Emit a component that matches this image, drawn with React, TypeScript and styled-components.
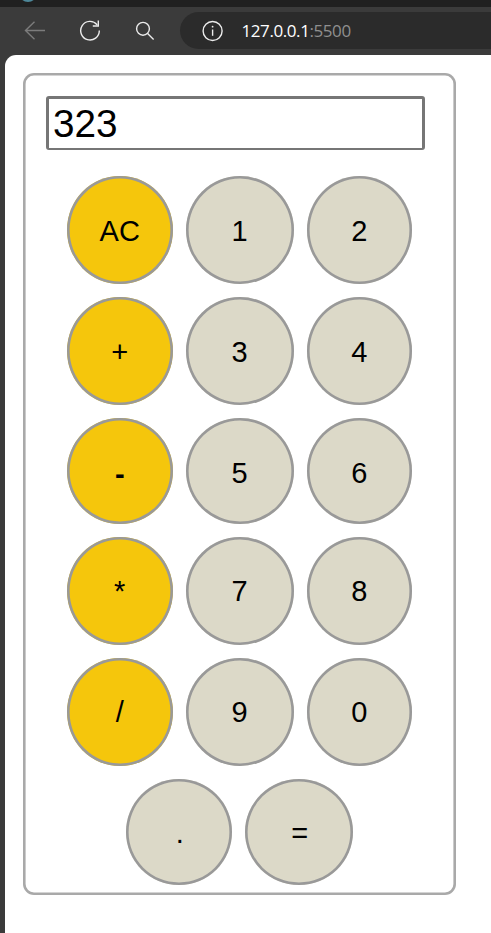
import React, { useState } from "react";
import styled, { createGlobalStyle } from "styled-components";

const GlobalStyle = createGlobalStyle`
  * { box-sizing: border-box; }
  html, body { margin: 0; padding: 0; background: #3b3b3b; overflow: hidden; }
`;

const Browser = styled.div`
  display: flex;
  flex-direction: column;
  height: 100vh;
  background: #3b3b3b;
  font-family: "Liberation Sans", Arial, sans-serif;
`;

const TabStrip = styled.div`
  flex: none;
  height: 7px;
  padding-left: 20px;
  background: #202020;
`;

const Toolbar = styled.div`
  flex: none;
  display: flex;
  align-items: center;
  height: 48px;
  padding: 5px 0 6px 20px;
`;

const ToolButton = styled.span<{ $dim?: boolean }>`
  display: flex;
  justify-content: center;
  width: 30px;
  margin-right: 25px;
  color: ${(p) => (p.$dim ? "#7c7c7c" : "#ececec")};
`;

const AddressBar = styled.div`
  display: flex;
  align-items: center;
  flex: 1;
  height: 37px;
  margin-left: -5px;
  padding-left: 21.5px;
  border-radius: 19px 0 0 19px;
  background: #2b2b2b;
  color: #ececec;
`;

const Url = styled.span`
  margin-left: 18px;
  font: 400 17px/24px "Open Sans", "Noto Sans", sans-serif;
  letter-spacing: -0.42px;
  color: #fff;
`;

const Port = styled.span`
  color: #8f8f8f;
`;

const Page = styled.main`
  flex: 1;
  margin-left: 5px;
  padding: 18px 0 0 18px;
  border-radius: 11px 0 0 0;
  background: #fff;
`;

const Calculator = styled.section`
  display: flex;
  flex-direction: column;
  width: 433px;
  height: 822px;
  padding: 23px 23px 0;
  border-radius: 11px;
  box-shadow: inset 0 0 0 2.6px #a9a9a9;
`;

const Display = styled.input`
  flex: none;
  width: 379px;
  height: 54px;
  margin-bottom: 26px;
  padding: 0 0 0 4px;
  border: 3px solid #767676;
  border-bottom-width: 2px;
  border-radius: 3px;
  outline: none;
  background: #fff;
  color: #000;
  font: 38.7px "Liberation Sans", Arial, sans-serif;
`;

const Keypad = styled.div`
  display: grid;
  grid-template-columns: 105.5px 108px 105.5px;
  grid-template-rows: 108px 108px 106px 108px 108px;
  column-gap: 13px;
  row-gap: 13px;
  margin-left: 21px;
`;

const LastRow = styled.div`
  display: grid;
  grid-template-columns: 105.5px 108px;
  grid-template-rows: 106px;
  column-gap: 13.3px;
  margin: 13px 0 0 80px;
`;

const Key = styled.button<{ $operator?: boolean; $drop?: number }>`
  display: flex;
  align-items: center;
  justify-content: center;
  margin: 0;
  padding: ${(p) => 4 + (p.$drop ?? 0)}px 0 ${(p) => 4 - (p.$drop ?? 0)}px;
  border: 0;
  border-radius: 50%;
  box-shadow: inset 0 0 0 2.6px #999;
  background: ${(p) => (p.$operator ? "#f5c60c" : "#dcd9c8")};
  color: #000;
  font: 29px "Liberation Sans", Arial, sans-serif;
`;

const Minus = styled.span`
  font-weight: 700;
  line-height: 1;
  padding-top: 3px;
`;

const LastLabel = styled.span`
  padding-left: 2px;
`;

const rows = [
  { keys: ["AC", "1", "2"], drop: 1 },
  { keys: ["+", "3", "4"], drop: 1 },
  { keys: ["-", "5", "6"], drop: 2 },
  { keys: ["*", "7", "8"], drop: 0 },
  { keys: ["/", "9", "0"], drop: 0 },
];

function Favicon() {
  return (
    <svg width="16" height="2" viewBox="0 0 16 2" display="block">
      <circle cx="8" cy="-7" r="9" fill="#4d8799" />
    </svg>
  );
}

function BackIcon() {
  return (
    <svg width="22" height="20" viewBox="0 0 22 20" fill="none" stroke="currentColor" strokeWidth="1.4">
      <path d="M21 9.5H1.5M10.5 0.8L1.5 9.5l9 8.8" />
    </svg>
  );
}

function ReloadIcon() {
  return (
    <svg width="22" height="22" viewBox="0 0 22 22" fill="none" stroke="currentColor" strokeWidth="1.4">
      <path d="M20.3 10.6A9.3 9.3 0 1 1 18.1 4.7M19.3 0.6V6H13.8" />
    </svg>
  );
}

function SearchIcon() {
  return (
    <svg width="20" height="20" viewBox="0 0 20 20" fill="none" stroke="currentColor" strokeWidth="1.4">
      <circle cx="8" cy="7.8" r="6.4" />
      <path d="M12.6 12.4l6 6" />
    </svg>
  );
}

function InfoIcon() {
  return (
    <svg width="22" height="22" viewBox="0 0 22 22" fill="none" stroke="currentColor" strokeWidth="1.4">
      <circle cx="10.6" cy="11" r="9.5" />
      <path d="M10.6 9.5v6.3" />
      <circle cx="10.6" cy="6.7" r="0.9" fill="currentColor" stroke="none" />
    </svg>
  );
}

export default function App() {
  const [value, setValue] = useState("323");

  const press = (key: string) => {
    setValue((current) => (key === "AC" ? "" : key === "=" ? current : current + key));
  };

  return (
    <Browser>
      <GlobalStyle />
      <TabStrip>
        <Favicon />
      </TabStrip>
      <Toolbar>
        <ToolButton $dim>
          <BackIcon />
        </ToolButton>
        <ToolButton>
          <ReloadIcon />
        </ToolButton>
        <ToolButton>
          <SearchIcon />
        </ToolButton>
        <AddressBar>
          <InfoIcon />
          <Url>
            127.0.0.1<Port>:5500</Port>
          </Url>
        </AddressBar>
      </Toolbar>
      <Page>
        <Calculator>
          <Display value={value} readOnly />
          <Keypad>
            {rows.map((row) =>
              row.keys.map((key, column) => (
                <Key key={key} $operator={column === 0} $drop={row.drop} onClick={() => press(key)}>
                  {key === "-" ? <Minus>-</Minus> : key}
                </Key>
              )),
            )}
          </Keypad>
          <LastRow>
            <Key $drop={1} onClick={() => press(".")}>
              <LastLabel>.</LastLabel>
            </Key>
            <Key $drop={1} onClick={() => press("=")}>
              <LastLabel>=</LastLabel>
            </Key>
          </LastRow>
        </Calculator>
      </Page>
    </Browser>
  );
}
